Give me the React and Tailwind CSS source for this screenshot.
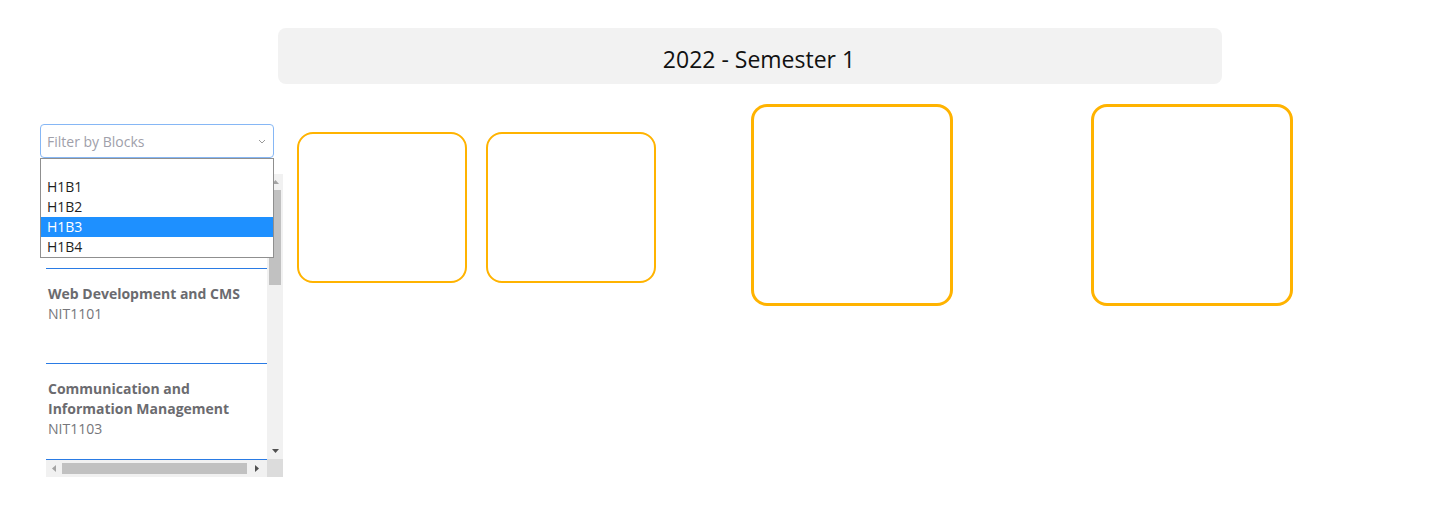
import React from 'react';

const BLOCKS = ['', 'H1B1', 'H1B2', 'H1B3', 'H1B4'];

const UNITS = [
  { title: 'Web Development and CMS', code: 'NIT1101' },
  { title: 'Communication and Information Management', code: 'NIT1103' },
];

function BlockFilter() {
  return (
    <div className="relative w-[234px]">
      <div className="flex h-[34px] items-center justify-between rounded-[4px] border border-[#86b7f5] bg-white pl-[6px] pr-[6px] text-[14px] text-[#a0a0aa]">
        <span>Filter by Blocks</span>
        <svg width="8" height="5" viewBox="0 0 8 5" className="mr-[1px]">
          <path d="M1 1l3 3 3-3" fill="none" stroke="#9a9a9a" strokeWidth="1" />
        </svg>
      </div>
      {/* open option list */}
      <div className="absolute left-0 top-[34px] z-10 w-[234px] border border-[#8f8f8f] bg-white text-[14px] text-[#1f1f1f]">
        {BLOCKS.map((b, i) => (
          <div
            key={i}
            className={
              (b === '' ? 'h-[18px] ' : 'h-[20px] ') +
              'flex items-center pl-[6px] leading-[20px] ' +
              (b === 'H1B3' ? 'bg-[#1e90ff] text-white' : '')
            }
          >
            {b}
          </div>
        ))}
      </div>
    </div>
  );
}

function UnitList() {
  return (
    <div className="ml-[6px] mt-[16px] flex h-[303px] w-[237px] flex-col">
      <div className="flex flex-1">
        <div className="w-[221px] overflow-hidden bg-white">
          <div className="h-[94px]" />
          {UNITS.map((u) => (
            <div key={u.code} className="min-h-[95px] border-t border-[#2a7be4] pl-[2px] pt-[15px] text-[14px] leading-[20px]">
              <div className="font-bold text-[#6b6b6f]">{u.title}</div>
              <div className="text-[#76767a]">{u.code}</div>
            </div>
          ))}
        </div>
        {/* vertical scrollbar */}
        <div className="flex w-[16px] flex-col items-center bg-[#f1f1f1]">
          <div className="flex h-[16px] items-center justify-center">
            <svg width="7" height="4" viewBox="0 0 7 4"><path d="M0 4h7L3.5 0z" fill="#a3a3a3" /></svg>
          </div>
          <div className="h-[95px] w-[12px] bg-[#c1c1c1]" />
          <div className="flex-1" />
          <div className="flex h-[16px] items-center justify-center">
            <svg width="7" height="4" viewBox="0 0 7 4"><path d="M0 0h7L3.5 4z" fill="#505050" /></svg>
          </div>
        </div>
      </div>
      {/* horizontal scrollbar */}
      <div className="flex h-[18px]">
        <div className="flex w-[221px] flex-col">
          <div className="h-px bg-[#2a7be4]" />
          <div className="flex flex-1 items-center bg-[#f1f1f1]">
            <div className="flex w-[16px] items-center justify-center">
              <svg width="4" height="7" viewBox="0 0 4 7"><path d="M4 0v7L0 3.5z" fill="#a3a3a3" /></svg>
            </div>
            <div className="h-[11px] w-[185px] bg-[#c1c1c1]" />
            <div className="flex flex-1 items-center justify-center">
              <svg width="4" height="7" viewBox="0 0 4 7"><path d="M0 0v7l4-3.5z" fill="#505050" /></svg>
            </div>
          </div>
        </div>
        <div className="w-[16px] bg-[#dcdcdc]" />
      </div>
    </div>
  );
}

export default function App() {
  return (
    <div className="min-h-[525px] w-[1445px] bg-white pt-[28px] font-['Open_Sans','Noto_Sans',sans-serif]">
      <div className="ml-[278px] flex h-[56px] w-[944px] items-center justify-center rounded-[8px] bg-[#f2f2f2] pl-[18px] pt-[6px] text-[23px] text-[#111]">
        2022 - Semester 1
      </div>
      <div className="mt-[20px] flex items-start">
        <div className="ml-[40px] w-[243px] pt-[20px]">
          <BlockFilter />
          <UnitList />
        </div>
        <div className="ml-[14px] mt-[28px] h-[151px] w-[170px] rounded-[16px] border-2 border-[#ffb300]" />
        <div className="ml-[19px] mt-[28px] h-[151px] w-[170px] rounded-[16px] border-2 border-[#ffb300]" />
        <div className="ml-[95px] h-[202px] w-[202px] rounded-[16px] border-[3px] border-[#ffb300]" />
        <div className="ml-[138px] h-[202px] w-[202px] rounded-[16px] border-[3px] border-[#ffb300]" />
      </div>
    </div>
  );
}
